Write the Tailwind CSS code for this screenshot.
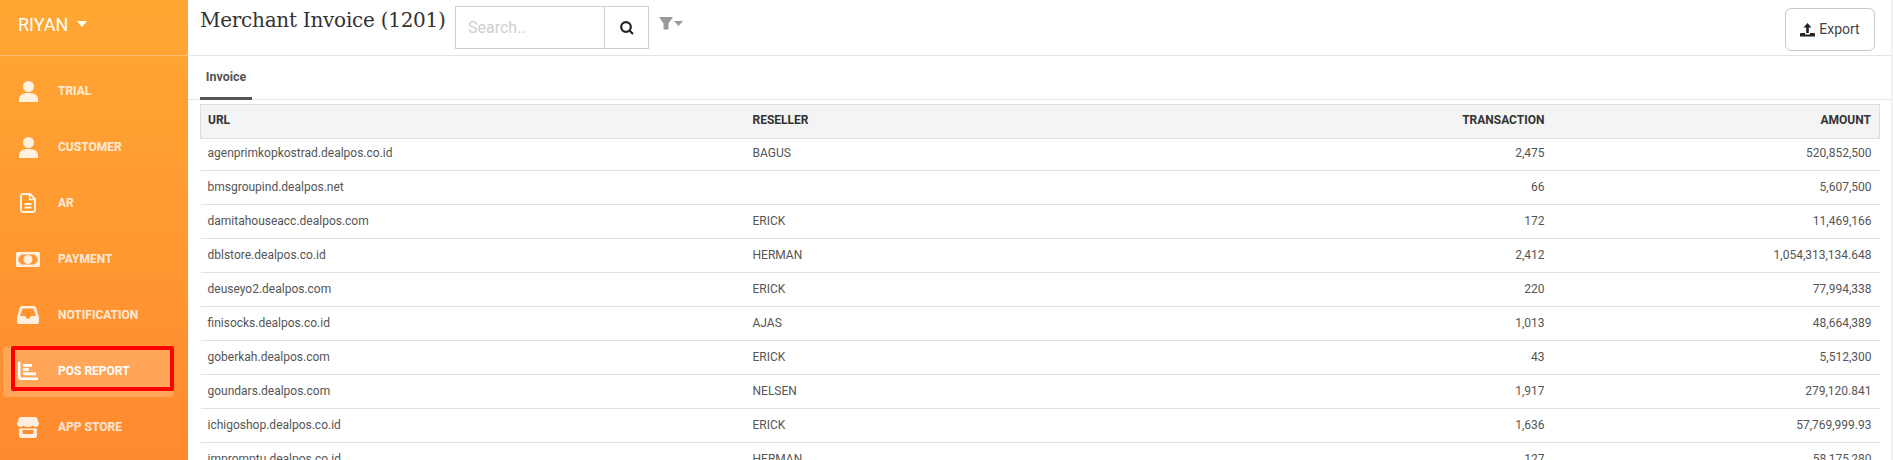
<!DOCTYPE html>
<html>
<head>
<meta charset="utf-8">
<script src="https://cdn.jsdelivr.net/npm/@tailwindcss/browser@4"></script>
</head>
<body class="m-0 overflow-hidden bg-white">
<div class="flex h-[460px] w-[1893px] overflow-hidden font-['Roboto',sans-serif]">
  <aside class="w-[188px] h-[460px] shrink-0 bg-gradient-to-b from-[#ffa733] to-[#ff8a2f] text-white">
    <div class="h-[56px] border-b border-white/30 flex items-center pl-[18px] pb-[7px] text-[18px]">
      <span>RIYAN</span>
      <svg class="ml-[9px]" width="10" height="6" viewBox="0 0 10 6"><path d="M0 0h10L5 6z" fill="#fff"/></svg>
    </div>
    <nav class="pt-[7px] text-[12px] font-bold text-white/80">
      <a class="flex items-center h-[56px] pl-[19px]">
        <span class="w-[39px] flex"><svg width="19" height="21" viewBox="0 0 19 21" fill="#fff" fill-opacity=".85"><circle cx="9.5" cy="5.5" r="5.5"/><path d="M0 21v-3c0-4 4-6 9.500-6S19 14 19 18v3z"/></svg></span>TRIAL
      </a>
      <a class="flex items-center h-[56px] pl-[19px]">
        <span class="w-[39px] flex"><svg width="19" height="21" viewBox="0 0 19 21" fill="#fff" fill-opacity=".85"><circle cx="9.5" cy="5.5" r="5.500"/><path d="M0 21v-3c0-4 4-6 9.500-6S19 14 19 18v3z"/></svg></span>CUSTOMER
      </a>
      <a class="flex items-center h-[56px] pl-[20px]">
        <span class="w-[38px] flex"><svg width="16" height="20" viewBox="0 0 16 20" fill="none" stroke="#fff" stroke-opacity=".85" stroke-width="2"><path d="M3 1h7l5 5v11a2 2 0 0 1-2 2H3a2 2 0 0 1-2-2V3a2 2 0 0 1 2-2z"/><path d="M9.500 1v5.500H15" stroke-width="1.500"/><path d="M4.500 11h7M4.500 14.500h7"/></svg></span>AR
      </a>
      <a class="flex items-center h-[56px] pl-[16px]">
        <span class="w-[42px] flex"><svg width="24" height="15" viewBox="0 0 24 15" fill="#fff" fill-opacity=".85"><path fill-rule="evenodd" d="M1.500 0h21A1.500 1.500 0 0 1 24 1.500v12a1.500 1.500 0 0 1-1.500 1.500h-21A1.500 1.500 0 0 1 0 13.500v-12A1.500 1.500 0 0 1 1.500 0zM5 2.500C5 4 4 5 2.500 5v5C4 10 5 11 5 12.500h14C19 11 20 10 21.500 10V5C20 5 19 4 19 2.500z"/><ellipse cx="12" cy="7.500" rx="4.500" ry="4.500"/></svg></span>PAYMENT
      </a>
      <a class="flex items-center h-[56px] pl-[17px]">
        <span class="w-[41px] flex"><svg width="22" height="18" viewBox="0 0 22 18" fill="#fff" fill-opacity=".85"><path fill-rule="evenodd" d="M5 0h12c1 0 1.700.5 2 1.500L22 11v5a2 2 0 0 1-2 2H2a2 2 0 0 1-2-2v-5L3 1.500C3.300.5 4 0 5 0zM5.500 2.500L3.200 10h4.800l1.500 2.500h3L14 10h4.800l-2.300-7.500z"/></svg></span>NOTIFICATION
      </a>
      <a class="relative flex items-center h-[50px] w-[170px] ml-[3px] mt-[4px] mb-[2px] pb-[2px] pl-[15px] rounded-[3px] bg-white/20 text-white">
        <span class="w-[40px] flex"><svg width="20" height="18" viewBox="0 0 20 18" fill="#fff"><path d="M0 0h2.500v14a1.500 1.500 0 0 0 1.500 1.500h16V18H3a3 3 0 0 1-3-3z"/><rect x="5" y="2" width="9" height="2.800"/><rect x="5" y="6.200" width="6" height="2.800"/><rect x="5" y="10.400" width="13" height="2.800"/></svg></span>POS REPORT
        <span class="absolute left-[8px] top-[-1px] w-[163px] h-[45px] border-[4px] border-[#ff0000] rounded-[2px]"></span>
      </a>
      <a class="flex items-center h-[56px] pl-[17px]">
        <span class="w-[41px] flex"><svg width="22" height="21" viewBox="0 0 22 21" fill="#fff" fill-opacity=".85"><path d="M4 0h14c1 0 1.800.5 2.200 1.500L22 6.500C22 8.500 20.500 10 18.500 10c-1.400 0-2.400-.6-3-1.500-.8.900-2 1.500-4.500 1.500s-3.700-.6-4.500-1.500c-.6.900-1.600 1.500-3 1.500C1.500 10 0 8.500 0 6.500L1.800 1.500C2.200.5 3 0 4 0z"/><path fill-rule="evenodd" d="M2 11.500h18V19a2 2 0 0 1-2 2H4a2 2 0 0 1-2-2zM5.500 13v2.500c0 .8.500 1.500 1.500 1.500h8c1 0 1.500-.7 1.500-1.500V13z"/></svg></span>APP STORE
      </a>
    </nav>
  </aside>
  <main class="flex-1 min-w-0">
    <header class="h-[56px] border-b border-[#e4e4e4] flex items-start pl-[12px] pr-[16px]">
      <h1 class="w-[255px] shrink-0 mt-[5px] text-[20px] leading-[30px] tracking-[-0.26px] text-[#333] font-['DejaVu_Serif',serif]">Merchant Invoice (1201)</h1>
      <div class="mt-[6px] flex h-[43px] w-[194px] border border-[#ccd0d6] bg-white">
        <div class="w-[148px] h-full pl-[12px] flex items-center text-[16px] text-[#cfcfcf]">Search..</div>
        <div class="flex-1 border-l border-[#ccd0d6] flex items-center justify-center">
          <svg width="14" height="14" viewBox="0 0 14 14" fill="none" stroke="#222" stroke-width="2.200"><circle cx="6" cy="6" r="4.800"/><path d="M9.500 9.500l3.500 3.500"/></svg>
        </div>
      </div>
      <div class="ml-[10px] mt-[17px] flex items-center">
        <svg width="14" height="13" viewBox="0 0 14 13" fill="#999"><path d="M0 0h14L9.500 6.500V12.500H4.500V6.500z"/></svg>
        <svg class="ml-[1px]" width="9" height="5" viewBox="0 0 9 5" fill="#999"><path d="M0 0h9L4.500 5z"/></svg>
      </div>
      <button class="ml-auto mt-[8px] w-[90px] h-[43px] border border-[#c8c8c8] rounded-[6px] flex items-center justify-center gap-[4px] text-[14px] text-[#444]">
        <svg width="15" height="14" viewBox="0 0 15 14" fill="#222"><path d="M7.500 0L11.500 4.500H8.800v5.500H6.200V4.500H3.500z"/><path d="M0 13.500V11a1 1 0 0 1 1-1h4v1.500h5V10h4a1 1 0 0 1 1 1v2.500z"/></svg>
        <span>Export</span>
      </button>
    </header>
    <div class="h-[44px] border-b border-[#e4e4e4] pl-[12px]">
      <div class="w-[52px] h-[44px] border-b-[3px] border-[#555] flex items-center justify-center pt-[2px] text-[12.5px] font-bold text-[#555]">Invoice</div>
    </div>
    <div class="pt-[4px] pl-[12px]">
      <table class="w-[1679px] table-fixed border-collapse text-[12px] text-[#555]">
        <colgroup><col class="w-[544px]"><col class="w-[404px]"><col class="w-[404px]"><col class="w-[327px]"></colgroup>
        <thead>
          <tr class="h-[34px] bg-[#f4f4f4] border border-[#dedede] text-[#333] font-bold">
            <th class="pl-[7px] pr-[8px] pb-[3px] text-left">URL</th><th class="px-[8px] pb-[3px] text-left">RESELLER</th><th class="px-[8px] pb-[3px] text-right">TRANSACTION</th><th class="px-[8px] pb-[3px] text-right">AMOUNT</th>
          </tr>
        </thead>
        <tbody>
          <tr class="h-[32px] border-b border-[#e0e0e0]"><td class="pl-[7px] pr-[8px] pb-[3px]">agenprimkopkostrad.dealpos.co.id</td><td class="px-[8px] pb-[3px]">BAGUS</td><td class="px-[8px] pb-[3px] text-right">2,475</td><td class="px-[8px] pb-[3px] text-right">520,852,500</td></tr>
          <tr class="h-[34px] border-b border-[#e0e0e0]"><td class="pl-[7px] pr-[8px] pb-[1px]">bmsgroupind.dealpos.net</td><td class="px-[8px] pb-[1px]"></td><td class="px-[8px] pb-[1px] text-right">66</td><td class="px-[8px] pb-[1px] text-right">5,607,500</td></tr>
          <tr class="h-[34px] border-b border-[#e0e0e0]"><td class="pl-[7px] pr-[8px] pb-[1px]">damitahouseacc.dealpos.com</td><td class="px-[8px] pb-[1px]">ERICK</td><td class="px-[8px] pb-[1px] text-right">172</td><td class="px-[8px] pb-[1px] text-right">11,469,166</td></tr>
          <tr class="h-[34px] border-b border-[#e0e0e0]"><td class="pl-[7px] pr-[8px] pb-[1px]">dblstore.dealpos.co.id</td><td class="px-[8px] pb-[1px]">HERMAN</td><td class="px-[8px] pb-[1px] text-right">2,412</td><td class="px-[8px] pb-[1px] text-right">1,054,313,134.648</td></tr>
          <tr class="h-[34px] border-b border-[#e0e0e0]"><td class="pl-[7px] pr-[8px] pb-[1px]">deuseyo2.dealpos.com</td><td class="px-[8px] pb-[1px]">ERICK</td><td class="px-[8px] pb-[1px] text-right">220</td><td class="px-[8px] pb-[1px] text-right">77,994,338</td></tr>
          <tr class="h-[34px] border-b border-[#e0e0e0]"><td class="pl-[7px] pr-[8px] pb-[1px]">finisocks.dealpos.co.id</td><td class="px-[8px] pb-[1px]">AJAS</td><td class="px-[8px] pb-[1px] text-right">1,013</td><td class="px-[8px] pb-[1px] text-right">48,664,389</td></tr>
          <tr class="h-[34px] border-b border-[#e0e0e0]"><td class="pl-[7px] pr-[8px] pb-[1px]">goberkah.dealpos.com</td><td class="px-[8px] pb-[1px]">ERICK</td><td class="px-[8px] pb-[1px] text-right">43</td><td class="px-[8px] pb-[1px] text-right">5,512,300</td></tr>
          <tr class="h-[34px] border-b border-[#e0e0e0]"><td class="pl-[7px] pr-[8px] pb-[1px]">goundars.dealpos.com</td><td class="px-[8px] pb-[1px]">NELSEN</td><td class="px-[8px] pb-[1px] text-right">1,917</td><td class="px-[8px] pb-[1px] text-right">279,120.841</td></tr>
          <tr class="h-[34px] border-b border-[#e0e0e0]"><td class="pl-[7px] pr-[8px] pb-[1px]">ichigoshop.dealpos.co.id</td><td class="px-[8px] pb-[1px]">ERICK</td><td class="px-[8px] pb-[1px] text-right">1,636</td><td class="px-[8px] pb-[1px] text-right">57,769,999.93</td></tr>
          <tr class="h-[34px] border-b border-[#e0e0e0]"><td class="pl-[7px] pr-[8px] pb-[1px]">impromptu.dealpos.co.id</td><td class="px-[8px] pb-[1px]">HERMAN</td><td class="px-[8px] pb-[1px] text-right">127</td><td class="px-[8px] pb-[1px] text-right">58,175,280</td></tr>
        </tbody>
      </table>
    </div>
  </main>
  <div class="w-[2px] h-[460px] shrink-0 bg-[#f1f1f1]"></div>
</div>
</body>
</html>
